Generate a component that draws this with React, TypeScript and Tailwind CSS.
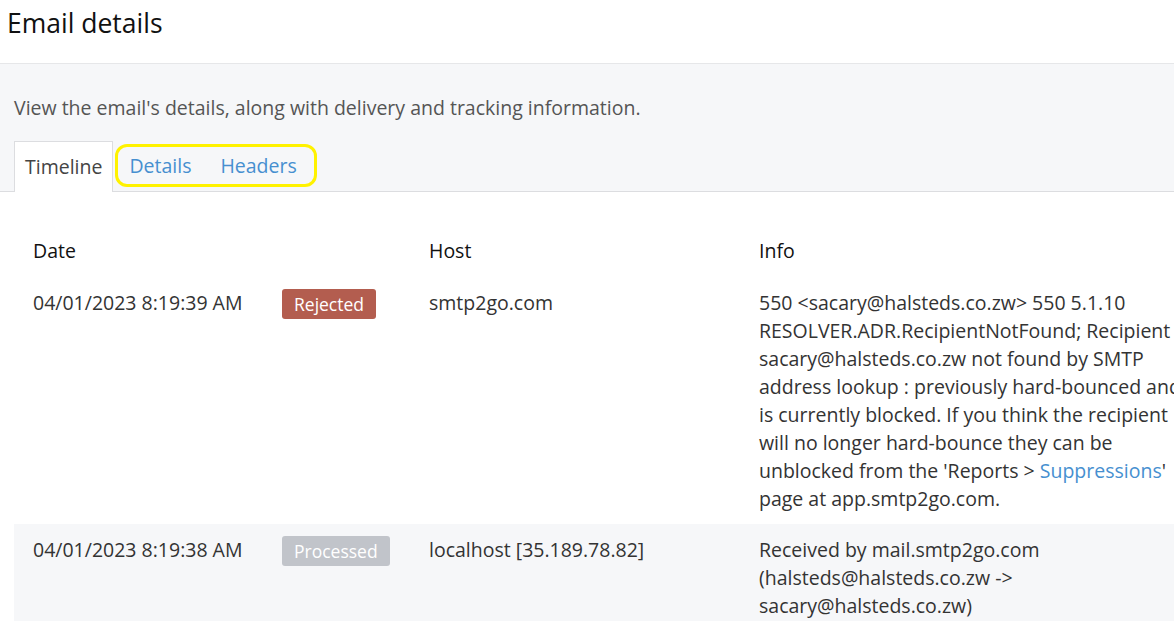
import React from "react";

const font = { fontFamily: '"Open Sans", "Noto Sans", sans-serif' };

function Badge({ label, tone }: { label: string; tone: "red" | "gray" }) {
  return (
    <span
      className={
        "inline-block rounded-[3px] px-[12px] py-[3px] text-[17.5px] leading-[24px] text-white " +
        (tone === "red" ? "bg-[#b35d4f]" : "bg-[#c1c4ca]")
      }
    >
      {label}
    </span>
  );
}

export default function App() {
  return (
    <div className="w-[1174px] h-[621px] overflow-hidden bg-white text-[#333]" style={font}>
      <div className="h-[64px] border-b border-[#e6e7e9] flex items-center px-[7px]">
        <h1 className="text-[26.5px] leading-[34px] text-[#111] mb-[18px]">Email details</h1>
      </div>
      <div className="bg-[#f6f7f9] pt-[30px] border-b border-[#dcdde0]">
        <p className="px-[14px] text-[19.5px] leading-[28px] text-[#555]">
          View the email's details, along with delivery and tracking information.
        </p>
        <div className="mt-[19px] px-[14px] flex items-end -mb-px">
          <div className="h-[51px] px-[10px] flex items-center bg-white border border-b-0 border-[#dcdde0] text-[19.5px] text-[#444]">
            Timeline
          </div>
          <div className="ml-[2px] mb-[5px] h-[43px] w-[202px] rounded-[12px] border-[3px] border-[#fff200] flex items-center text-[19.5px] text-[#468fd0]">
            <span className="ml-[11px]">Details</span>
            <span className="ml-[29px]">Headers</span>
          </div>
        </div>
      </div>
      <div className="pt-[25px] pl-[14px] w-[1240px]">
        <div className="grid grid-cols-[249px_147px_330px_474px] text-[19.5px] leading-[28px]">
          <div className="px-[19px] pt-[20px] pb-[12px] text-[#111]">Date</div>
          <div className="px-[19px] pt-[20px] pb-[12px]"></div>
          <div className="px-[19px] pt-[20px] pb-[12px] text-[#111]">Host</div>
          <div className="px-[19px] pt-[20px] pb-[12px] text-[#111]">Info</div>

          <div className="px-[19px] py-[12px]">04/01/2023 8:19:39 AM</div>
          <div className="px-[19px] py-[12px]">
            <Badge label="Rejected" tone="red" />
          </div>
          <div className="px-[19px] py-[12px]">smtp2go.com</div>
          <div className="pl-[19px] pr-[20px] pt-[12px] pb-[11px]">
            550 &lt;sacary@halsteds.co.zw&gt; 550 5.1.10 RESOLVER.ADR.RecipientNotFound; Recipient
            sacary@halsteds.co.zw not found by SMTP address lookup : previously hard-bounced and is
            currently blocked. If you think the recipient will no longer hard-bounce they can be
            unblocked from the 'Reports &gt; <span className="text-[#468fd0]">Suppressions</span>'
            page at app.smtp2go.com.
          </div>

          <div className="px-[19px] py-[12px] bg-[#f6f7f9]">04/01/2023 8:19:38 AM</div>
          <div className="px-[19px] py-[12px] bg-[#f6f7f9]">
            <Badge label="Processed" tone="gray" />
          </div>
          <div className="px-[19px] py-[12px] bg-[#f6f7f9]">localhost [35.189.78.82]</div>
          <div className="pl-[19px] pr-[20px] py-[12px] bg-[#f6f7f9]">
            Received by mail.smtp2go.com (halsteds@halsteds.co.zw -&gt; sacary@halsteds.co.zw)
          </div>
        </div>
      </div>
    </div>
  );
}
